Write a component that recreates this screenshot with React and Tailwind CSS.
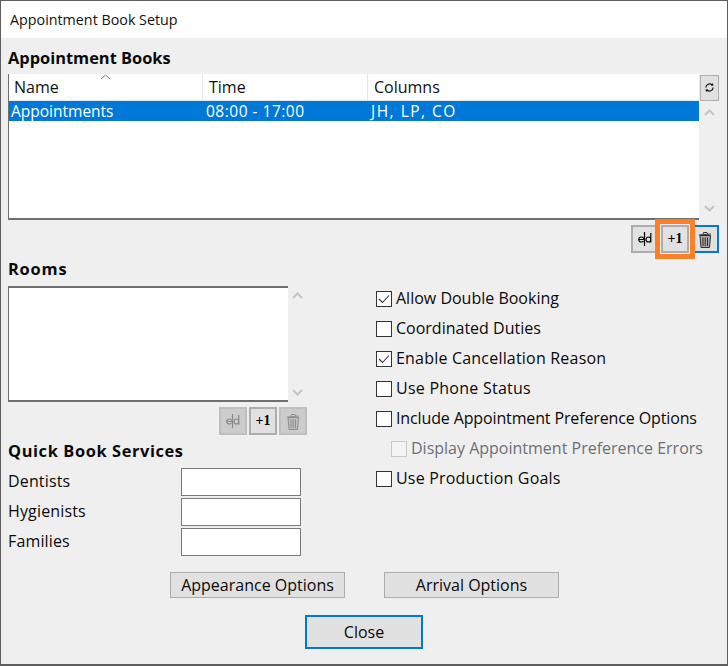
import { useState } from 'react';

const FONT = "font-['Open_Sans','Noto_Sans',sans-serif]";

/* chevron on the scrollbars */
function Chevron({ down, className = '' }) {
  return (
    <svg width="11" height="7" viewBox="0 0 11 7" className={className} fill="none">
      <path d={down ? 'M1 1l4.5 4.5L10 1' : 'M1 6l4.5-4.5L10 6'} stroke="#c4c4c4" strokeWidth="2" />
    </svg>
  );
}

function EditIcon({ color = '#000' }) {
  return (
    <svg width="14" height="16" viewBox="0 0 14 16" fill="none" stroke={color} strokeWidth="1.2">
      <path d="M.8 8.5h5M5.800 8.500C5.800 6.900 4.800 6 3.300 6S.8 7 .8 8.500 2 11 3.300 11c1 0 1.800-.3 2.300-1" />
      <path d="M6.500 1v14" />
      <path d="M12.800 2v9.500M12.800 8.500c0-1.600-1-2.500-2.300-2.500S8 7 8 8.500 9.100 11 10.500 11s2.300-1 2.300-2.500" />
    </svg>
  );
}

function TrashIcon({ muted }) {
  const line = muted ? '#8e8e8e' : '#2e2e2e';
  return (
    <svg width="14" height="17" viewBox="0 0 14 17" fill="none">
      <path d="M2 4.500h10.500l-1 12H3z" fill={muted ? '#bdbdbd' : '#a8a8a8'} stroke={line} />
      <path d="M.8 4 13 3M5 3l.5-1.500h3.500L9.500 3" stroke={line} />
      <path d="M5 6.500v8.500M7.200 6.500v8.500M9.500 6.500v8.500" stroke={line} />
    </svg>
  );
}

function ToolButton({ children, disabled, focused, className = '' }) {
  const skin = focused
    ? 'border-2 border-[#0078d7] bg-[#e1e1e1]'
    : disabled
      ? 'border-2 border-[#bfbfbf] bg-[#cccccc]'
      : 'border-2 border-[#adadad] bg-[#e1e1e1]';
  return (
    <div className={`w-[28px] h-[28px] flex items-center justify-center shrink-0 ${skin} ${className}`}>
      {children}
    </div>
  );
}

function PlusOne() {
  return <span className="font-['Liberation_Serif',serif] font-bold text-[14px] leading-none text-black">+1</span>;
}

function Heading({ children, className = '' }) {
  return (
    <h2 className={`h-[22px] font-bold text-[16.400px] leading-[22px] text-[#0a0a0a] whitespace-nowrap ${className}`}>
      {children}
    </h2>
  );
}

function Check({ label, checked, disabled, className = '', textClass = '' }) {
  return (
    <div className={`h-[30px] flex items-center ${className}`}>
      <span
        className={`w-[16px] h-[16px] border flex items-center justify-center shrink-0 ${
          disabled ? 'border-[#c8c8c8] bg-[#f4f4f4]' : 'border-[#333333] bg-white'
        }`}
      >
        {checked && (
          <svg width="12" height="10" viewBox="0 0 12 10" fill="none">
            <path d="M1 5l3.500 3.500L11 1.500" stroke="#333" strokeWidth="1.100" />
          </svg>
        )}
      </span>
      <span className={`ml-[4px] pb-[2px] text-[16px] leading-none whitespace-nowrap ${disabled ? 'text-[#6d7078]' : 'text-[#0a0a0a]'} ${textClass}`}>
        {label}
      </span>
    </div>
  );
}

function ServiceRow({ label }) {
  return (
    <div className="h-[28px] flex items-center mb-[2px]">
      <span className="w-[173px] pb-[2px] text-[16px] tracking-[0.15px] leading-none text-[#0a0a0a]">{label}</span>
      <div className="w-[120px] h-[28px] bg-white border border-[#7a7a7a]" />
    </div>
  );
}

export default function App() {
  const [rows] = useState([{ name: 'Appointments', time: '08:00 - 17:00', cols: 'JH, LP, CO' }]);

  return (
    <div className={`w-[728px] h-[666px] border border-[#5e5e5e] border-b-2 bg-[#efefef] flex flex-col relative overflow-hidden ${FONT}`}>
      <div className="h-[37px] shrink-0 bg-white flex items-center pl-[9px] text-[14.300px] text-[#111111]">
        Appointment Book Setup
      </div>

      <div className="pl-[7px] pt-[9px] flex-1 flex flex-col">
        <Heading className="mb-[5px]">Appointment Books</Heading>

        {/* books list */}
        <div className="flex items-start">
          <div className="w-[691px] h-[146px] bg-white border-b-2 border-l border-[#6e6e6e] flex flex-col">
            <div className="h-[27px] shrink-0 flex border-b border-[#e5e5e5] relative text-[16px] text-[#111111]">
              <div className="w-[194px] border-r border-[#e5e5e5] pl-[5px] leading-[26px]">Name</div>
              <div className="w-[165px] border-r border-[#e5e5e5] pl-[6px] leading-[26px]">Time</div>
              <div className="pl-[6px] leading-[26px]">Columns</div>
              <svg width="11" height="6" viewBox="0 0 11 6" fill="none" className="absolute left-[91px] top-0">
                <path d="M1 5l4.500-4L10 5" stroke="#777" />
              </svg>
            </div>
            {rows.map((r) => (
              <div key={r.name} className="h-[20px] bg-[#0078d7] text-white flex text-[15.500px] leading-[20px]">
                <div className="w-[195px] pl-[2px]">{r.name}</div>
                <div className="w-[165px] pl-[2px] tracking-[0.5px]">{r.time}</div>
                <div className="pl-[2px] tracking-[1.500px]">{r.cols}</div>
              </div>
            ))}
          </div>
          <div className="w-[19px] ml-[1px] h-[146px] flex flex-col items-center">
            <div className="w-[19px] h-[26px] mt-[1px] bg-[#e1e1e1] border border-[#adadad] flex items-center justify-center">
              <svg width="11" height="11" viewBox="0 0 11 11" fill="none" className="-mt-[1px]">
                <path d="M1.800 5.500A3.800 3.800 0 0 1 8.200 3M9.200 5.500A3.800 3.800 0 0 1 2.800 8" stroke="#111" strokeWidth="1.200" />
                <path d="M6.800 3.400 9.400 3.800 9 1zM4.200 7.600 1.600 7.200 2 10z" fill="#111" />
              </svg>
            </div>
            <Chevron className="mt-[8px]" />
            <div className="flex-1" />
            <Chevron down className="mb-[8px]" />
          </div>
        </div>

        <div className="flex justify-end h-[28px] mt-[5px] pr-[8px]">
          <ToolButton><EditIcon /></ToolButton>
          <ToolButton className="ml-[2px]"><PlusOne /></ToolButton>
          <ToolButton focused className="ml-[2px]"><TrashIcon /></ToolButton>
        </div>

        <div className="flex">
          {/* left column */}
          <div className="w-[368px] shrink-0">
            <Heading className="mt-[5px] tracking-[0.8px]">Rooms</Heading>
            <div className="flex mt-[6px]">
              <div className="w-[280px] h-[116px] bg-white border-y-2 border-l border-[#6e6e6e]" />
              <div className="w-[19px] h-[116px] flex flex-col items-center justify-between py-[6px]">
                <Chevron />
                <Chevron down />
              </div>
            </div>
            <div className="flex w-[299px] justify-end gap-[2px] mt-[5px]">
              <ToolButton disabled><EditIcon color="#8a8a8a" /></ToolButton>
              <ToolButton><PlusOne /></ToolButton>
              <ToolButton disabled><TrashIcon muted /></ToolButton>
            </div>
            <Heading className="mt-[5px] tracking-[0.6px]">Quick Book Services</Heading>
            <div className="mt-[6px]">
              <ServiceRow label="Dentists" />
              <ServiceRow label="Hygienists" />
              <ServiceRow label="Families" />
            </div>
          </div>

          {/* right column */}
          <div className="pt-[31px]">
            <Check label="Allow Double Booking" checked />
            <Check label="Coordinated Duties" />
            <Check label="Enable Cancellation Reason" checked textClass="tracking-[0.2px]" />
            <Check label="Use Phone Status" textClass="tracking-[0.25px]" />
            <Check label="Include Appointment Preference Options" textClass="tracking-[-0.13px]" />
            <Check label="Display Appointment Preference Errors" disabled className="ml-[15px]" />
            <Check label="Use Production Goals" textClass="tracking-[0.2px]" />
          </div>
        </div>

        <div className="flex mt-[14px] ml-[162px] gap-[39px]">
          <div className="w-[175px] h-[26px] bg-[#e1e1e1] border border-[#adadad] text-[16px] leading-[24px] text-center text-[#0a0a0a]">Appearance Options</div>
          <div className="w-[175px] h-[26px] bg-[#e1e1e1] border border-[#adadad] text-[16px] leading-[24px] text-center text-[#0a0a0a]">Arrival Options</div>
        </div>
        <div className="mt-[17px] ml-[297px] w-[118px] h-[34px] bg-[#e1e1e1] border-2 border-[#0078d7] text-[16px] leading-[30px] text-center text-[#0a0a0a]">Close</div>
      </div>

      {/* orange tutorial highlight around +1 */}
      <div className="absolute left-[654px] top-[218px] w-[40px] h-[40px] border-[5px] border-[#ff7f27]" />
    </div>
  );
}
